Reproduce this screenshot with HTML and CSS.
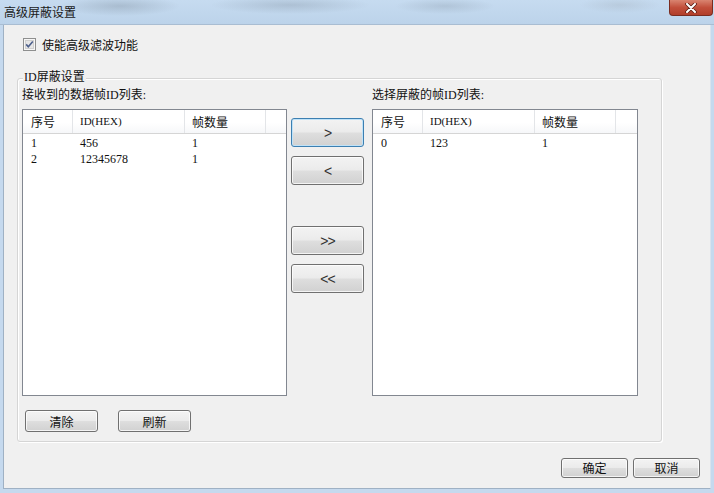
FILE: index.html
```html
<!DOCTYPE html>
<html lang="zh-CN">
<head>
  <meta charset="UTF-8" />
  <title>高级屏蔽设置</title>
  <link rel="stylesheet" href="styles.css">
</head>
<body>
  <div class="window">
    <div class="titlebar">
      <span class="title">高级屏蔽设置</span>
      <div class="close-btn">
        <svg width="12" height="10" viewBox="0 0 12 10">
          <path d="M2 1 L10 9 M10 1 L2 9" stroke="#5a1d14" stroke-width="3.6" stroke-linecap="round"/>
          <path d="M2 1 L10 9 M10 1 L2 9" stroke="#ffffff" stroke-width="2" stroke-linecap="round"/>
        </svg>
      </div>
    </div>

    <div class="frame">
      <div class="client">
        <label class="check-row">
          <span class="checkbox">
            <svg width="13" height="13" viewBox="0 0 13 13">
              <rect x="0.5" y="0.5" width="12" height="12" fill="#f6f6f6" stroke="#8e8f8f"/>
              <rect x="2.5" y="2.5" width="8" height="8" fill="#e6e6e6" stroke="#cfcfcf"/>
              <path d="M3.2 6.4 L5.3 8.8 L9.8 3.6" fill="none" stroke="#4c5f8c" stroke-width="1.6"/>
            </svg>
          </span>
          使能高级滤波功能
        </label>

        <div class="group">
          <span class="group-caption">ID屏蔽设置</span>

          <div class="lists">
            <div class="list-col">
              <div class="col-label">接收到的数据帧ID列表:</div>
              <div class="listview">
                <div class="lv-head">
                  <span>序号</span><span class="mono">ID(HEX)</span><span>帧数量</span><span></span>
                </div>
                <div class="lv-body">
                  <div class="lv-row"><span>1</span><span>456</span><span>1</span></div>
                  <div class="lv-row"><span>2</span><span>12345678</span><span>1</span></div>
                </div>
              </div>
            </div>

            <div class="move-col">
              <button class="btn move focused">&gt;</button>
              <button class="btn move">&lt;</button>
              <button class="btn move move-all">&gt;&gt;</button>
              <button class="btn move">&lt;&lt;</button>
            </div>

            <div class="list-col right">
              <div class="col-label">选择屏蔽的帧ID列表:</div>
              <div class="listview">
                <div class="lv-head">
                  <span>序号</span><span class="mono">ID(HEX)</span><span>帧数量</span><span></span>
                </div>
                <div class="lv-body">
                  <div class="lv-row"><span>0</span><span>123</span><span>1</span></div>
                </div>
              </div>
            </div>
          </div>

          <div class="group-actions">
            <button class="btn action">清除</button>
            <button class="btn action">刷新</button>
          </div>
        </div>

        <div class="footer">
          <button class="btn dialog">确定</button>
          <button class="btn dialog">取消</button>
        </div>
      </div>
    </div>
  </div>
</body>
</html>
```

FILE: styles.css
```css
body {
  margin: 0;
  width: 714px;
  height: 493px;
  overflow: hidden;
  font-family: "Liberation Serif", "Noto Sans CJK SC", serif;
  font-size: 12px;
  color: #111;
}
.window {
  width: 714px;
  height: 493px;
  display: flex;
  flex-direction: column;
}
.titlebar {
  height: 25px;
  flex: none;
  display: flex;
  align-items: flex-start;
  background:
    radial-gradient(ellipse 60px 10px at 120px 6px, rgba(120, 135, 150, 0.35), transparent),
    radial-gradient(ellipse 80px 9px at 290px 5px, rgba(120, 135, 150, 0.3), transparent),
    radial-gradient(ellipse 50px 8px at 445px 6px, rgba(120, 135, 150, 0.25), transparent),
    radial-gradient(ellipse 40px 8px at 620px 5px, rgba(150, 160, 170, 0.25), transparent),
    linear-gradient(#c6dbf0, #bcd3ea);
  border-bottom: 1px solid #a9bdd2;
  box-sizing: border-box;
}
.title {
  font-family: "Noto Sans CJK SC", sans-serif;
  line-height: 24px;
  padding-left: 4px;
  color: #1a1a1a;
}
.close-btn {
  margin-left: auto;
  margin-right: 1px;
  width: 44px;
  height: 16px;
  box-sizing: border-box;
  border: 1px solid #7a2c20;
  border-top: none;
  border-radius: 0 0 4px 4px;
  background: linear-gradient(#d98470, #c24f3b 50%, #b13e2a);
  display: flex;
  align-items: center;
  justify-content: center;
}
.frame {
  flex: 1;
  display: flex;
  border-left: 3px solid #c5d9ee;
  border-right: 3px solid #c5d9ee;
  border-bottom: 4px solid #c5d9ee;
  box-shadow: inset 0 -1px 0 #6f7e8e;
}
.client {
  flex: 1;
  background: #f0f0f0;
  border-left: 1px solid #9fb1c4;
  border-right: 1px solid #d9e3ee;
  border-bottom: 1px solid #9fb1c4;
  padding: 13px 10px 0 13px;
  display: flex;
  flex-direction: column;
}
.check-row {
  display: flex;
  align-items: center;
  height: 13px;
  padding-left: 6px;
  font-family: "Noto Sans CJK SC", sans-serif;
}
.checkbox {
  width: 13px;
  height: 13px;
  margin-right: 6px;
  display: flex;
}
.group {
  position: relative;
  margin-top: 27px;
  width: 645px;
  height: 364px;
  box-sizing: border-box;
  border: 1px solid #d5d5d5;
  box-shadow: inset 1px 1px 0 #fff, 1px 1px 0 #fff;
  border-radius: 3px;
  padding: 9px 0 0 4px;
}
.group-caption {
  position: absolute;
  left: 5px;
  top: -9px;
  padding: 0 1px;
  line-height: 14px;
  background: #f0f0f0;
}
.lists {
  display: flex;
}
.list-col {
  width: 265px;
  margin-right: 4px;
}
.list-col.right {
  width: 266px;
  margin-right: 0;
}
.col-label {
  height: 14px;
  line-height: 14px;
  margin-bottom: 7px;
}
.listview {
  height: 287px;
  box-sizing: border-box;
  border: 1px solid #828790;
  background: #fff;
}
.lv-head,
.lv-row {
  display: grid;
  grid-template-columns: 50px 112px 81px 1fr;
}
.lv-head {
  height: 23px;
  border-bottom: 1px solid #d5d5d5;
  background: linear-gradient(#ffffff, #ffffff 55%, #f6f7f9);
}
.lv-head span {
  font-family: "Noto Sans CJK SC", sans-serif;
  line-height: 23px;
  padding-left: 7px;
  border-right: 1px solid #e3e5e8;
}
.lv-head span.mono {
  font-family: "Liberation Serif", serif;
  font-size: 11px;
}
.lv-head span:first-child,
.lv-row span:first-child {
  padding-left: 8px;
}
.lv-head span:last-child {
  border-right: none;
}
.lv-body {
  padding-top: 1px;
}
.lv-row {
  height: 16px;
  line-height: 16px;
}
.lv-row span {
  padding-left: 7px;
}
.move-col {
  width: 73px;
  margin-right: 8px;
  padding-top: 30px;
  display: flex;
  flex-direction: column;
}
.btn {
  font-family: "Noto Sans CJK SC", sans-serif;
  font-size: 12px;
  color: #111;
  padding: 0;
  box-sizing: border-box;
  border: 1px solid #707070;
  border-radius: 3px;
  background: linear-gradient(#f3f3f3, #ebebeb 48%, #dedede 52%, #d1d1d1);
  box-shadow: inset 0 0 0 1px rgba(255, 255, 255, 0.75);
}
.btn.move {
  width: 73px;
  height: 29px;
  margin-top: 9px;
  font-family: "Liberation Sans", sans-serif;
  font-size: 14px;
  letter-spacing: -1px;
  color: #333;
}
.btn.move:first-child {
  margin-top: 0;
}
.btn.move-all {
  margin-top: 41px;
}
.btn.focused {
  border-color: #3c7fb1;
  box-shadow: inset 0 0 0 1px #bfe2f8;
}
.group-actions {
  display: flex;
  gap: 20px;
  margin-top: 14px;
  padding-left: 3px;
}
.btn.action {
  width: 73px;
  height: 22px;
}
.footer {
  display: flex;
  justify-content: flex-end;
  gap: 5px;
  margin-top: 16px;
}
.btn.dialog {
  width: 67px;
  height: 20px;
  line-height: 18px;
}
```
